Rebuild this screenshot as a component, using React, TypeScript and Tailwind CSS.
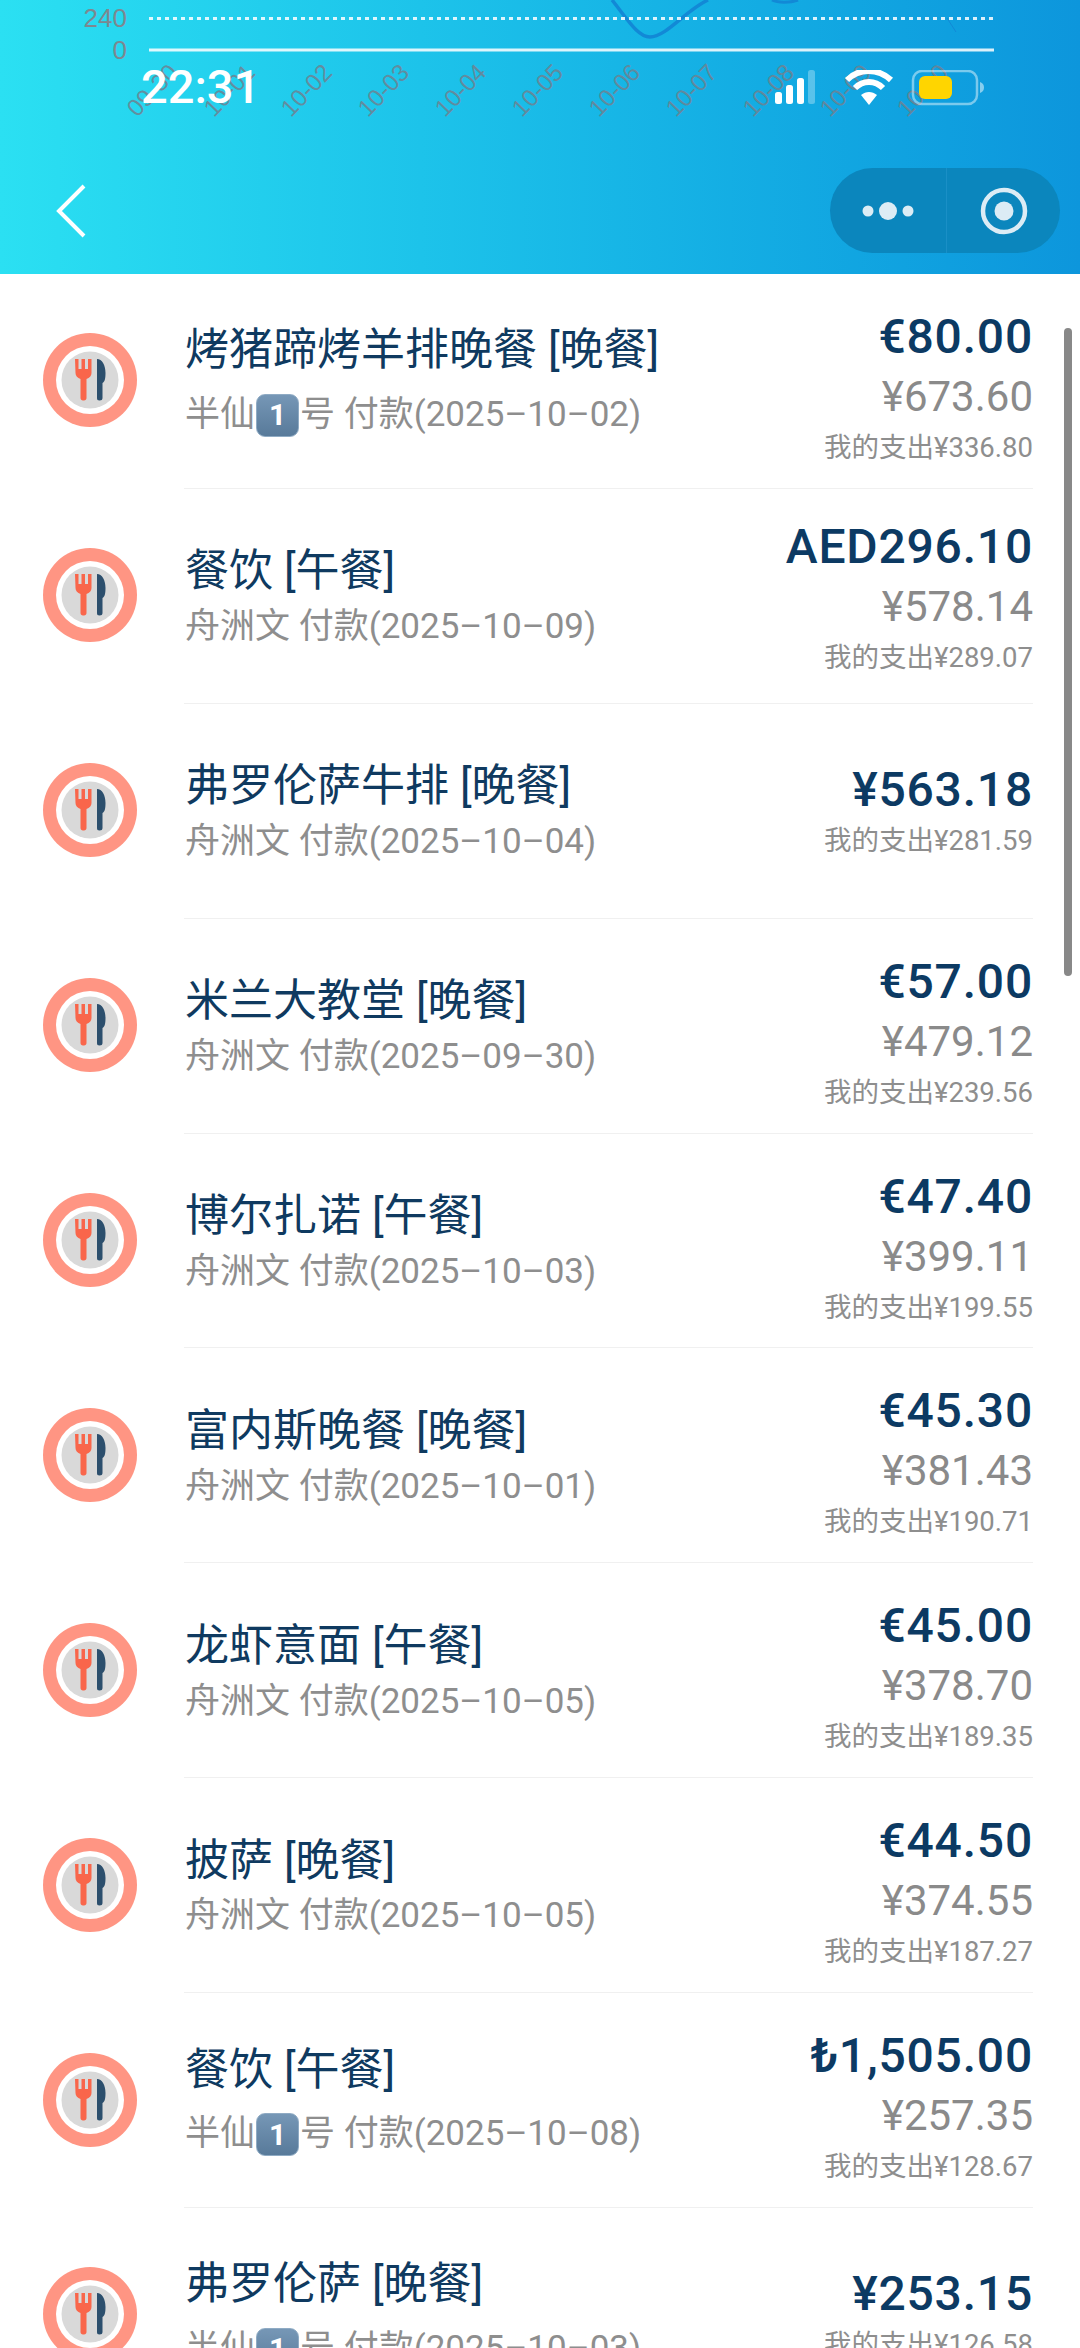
const FONT = "font-['Roboto','Noto_Sans_CJK_SC',sans-serif]";

type Expense = {
  title: string;
  payer: string;
  date: string;
  amount: string;
  converted?: string;
  mine: string;
  rightPad: string;
};

const EXPENSES: Expense[] = [
  { title: "烤猪蹄烤羊排晚餐 [晚餐]", payer: "半仙1号", date: "2025–10–02", amount: "€80.00", converted: "¥673.60", mine: "¥336.80", rightPad: "pt-[33px]" },
  { title: "餐饮 [午餐]", payer: "舟洲文", date: "2025–10–09", amount: "AED296.10", converted: "¥578.14", mine: "¥289.07", rightPad: "pt-[28px]" },
  { title: "弗罗伦萨牛排 [晚餐]", payer: "舟洲文", date: "2025–10–04", amount: "¥563.18", mine: "¥281.59", rightPad: "pt-[56px]" },
  { title: "米兰大教堂 [晚餐]", payer: "舟洲文", date: "2025–09–30", amount: "€57.00", converted: "¥479.12", mine: "¥239.56", rightPad: "pt-[33px]" },
  { title: "博尔扎诺 [午餐]", payer: "舟洲文", date: "2025–10–03", amount: "€47.40", converted: "¥399.11", mine: "¥199.55", rightPad: "pt-[33px]" },
  { title: "富内斯晚餐 [晚餐]", payer: "舟洲文", date: "2025–10–01", amount: "€45.30", converted: "¥381.43", mine: "¥190.71", rightPad: "pt-[33px]" },
  { title: "龙虾意面 [午餐]", payer: "舟洲文", date: "2025–10–05", amount: "€45.00", converted: "¥378.70", mine: "¥189.35", rightPad: "pt-[33px]" },
  { title: "披萨 [晚餐]", payer: "舟洲文", date: "2025–10–05", amount: "€44.50", converted: "¥374.55", mine: "¥187.27", rightPad: "pt-[33px]" },
  { title: "餐饮 [午餐]", payer: "半仙1号", date: "2025–10–08", amount: "₺1,505.00", converted: "¥257.35", mine: "¥128.67", rightPad: "pt-[33px]" },
  { title: "弗罗伦萨 [晚餐]", payer: "半仙1号", date: "2025–10–03", amount: "¥253.15", mine: "¥126.58", rightPad: "pt-[56px]" },
];

const CHART_DATES = ["09-30", "10-01", "10-02", "10-03", "10-04", "10-05", "10-06", "10-07", "10-08", "10-09", "10-10"];

// chart that has scrolled up behind the status bar
const ChartPeek = () => (
  <svg className="absolute left-0 top-0" width="1080" height="130" viewBox="0 0 1080 130" aria-hidden>
    <path d="M612 0C628 20 638 37 650 37C666 37 686 10 708 0" fill="none" stroke="#1289d6" strokeWidth="3.500" />
    <path d="M772 0C778 3 790 3 798 0" fill="none" stroke="#1289d6" strokeWidth="3" />
    <path d="M947 18L956 32" fill="none" stroke="#1289d6" strokeWidth="1" />
    <line x1="149" y1="18.5" x2="994" y2="18.5" stroke="#ffffff" strokeOpacity="0.85" strokeWidth="3" strokeDasharray="4 4" />
    <line x1="149" y1="50" x2="994" y2="50" stroke="#ffffff" strokeOpacity="0.85" strokeWidth="3" />
    <text x="127" y="27" textAnchor="end" fontFamily="Liberation Sans" fontSize="26" fill="#7d8890">240</text>
    <text x="127" y="59" textAnchor="end" fontFamily="Liberation Sans" fontSize="26" fill="#7d8890">0</text>
    {CHART_DATES.map((label, i) => (
      <text
        key={label}
        x={0}
        y={0}
        transform={`translate(${137 + i * 77} 118) rotate(-46)`}
        fontFamily="Liberation Sans"
        fontSize="24"
        fill="#6f8291"
        fillOpacity="0.85"
      >
        {label}
      </text>
    ))}
  </svg>
);

const StatusIcons = () => (
  <svg width="212" height="36" viewBox="0 0 212 36" aria-hidden>
    <rect x="0" y="22" width="7" height="12" rx="2.5" fill="#fff" />
    <rect x="11" y="15" width="7" height="19" rx="2.5" fill="#fff" />
    <rect x="22" y="8" width="7" height="26" rx="2.5" fill="#fff" />
    <rect x="33" y="0" width="7" height="34" rx="2.5" fill="#fff" fillOpacity="0.3" />
    <path d="M72 10C84 -2 103 -2 116 10" fill="none" stroke="#fff" strokeWidth="6" />
    <path d="M80 18C88 10 100 10 108 18" fill="none" stroke="#fff" strokeWidth="6" />
    <path d="M86 25C91 21 97 21 102 25L94 35Z" fill="#fff" />
    <rect x="138" y="1" width="64" height="33" rx="9" fill="none" stroke="#fff" strokeOpacity="0.45" strokeWidth="2.5" />
    <rect x="144" y="6" width="33" height="23" rx="6" fill="#ffd500" />
    <path d="M205 12C208 13 209 15 209 17.500C209 20 208 22 205 23Z" fill="#fff" fillOpacity="0.5" />
  </svg>
);

const MealIcon = () => (
  <svg className="-mt-[2px] shrink-0" width="94" height="94" viewBox="0 0 94 94" aria-hidden>
    <circle cx="47" cy="47" r="47" fill="#ff9583" />
    <circle cx="47" cy="47" r="34" fill="#ffffff" />
    <circle cx="47" cy="47" r="28.500" fill="#d9d9d9" />
    <path
      d="M32 26h3.500v10h3v-10h3.500v10h3v-10h3.500v14c0 3-2 5-5 6v19c0 1.500-1 2.500-2.500 2.500h-1c-1.500 0-2.500-1-2.500-2.500v-19c-3-1-5-3-5-6z"
      fill="#f9664b"
    />
    <path d="M54 26c5 0 8.500 6 8.500 14c0 6-1 9-3 10v15c0 1.700-1 2.500-3 2.500s-2.500-.800-2.500-2.500z" fill="#2c4f6d" />
  </svg>
);

// the keycap emoji in the payer name
const KeycapOne = () => (
  <span className="mx-[1px] inline-flex h-[43px] w-[43px] items-center justify-center rounded-[9px] border border-[#8fabc4] bg-gradient-to-b from-[#7697b6] to-[#587a9a] align-middle text-[30px] font-bold leading-none text-white">
    1
  </span>
);

const Payer = ({ name }: { name: string }) => {
  const parts = name.split("1");
  if (parts.length < 2) return <>{name}</>;
  return (
    <>
      {parts[0]}
      <KeycapOne />
      {parts[1]}
    </>
  );
};

const ExpenseRow = ({ item }: { item: Expense }) => {
  const hasKeycap = item.payer.includes("1");
  return (
    <div className="flex h-[214.9px] shrink-0 pl-[43px] pr-[47px]">
      <div className="flex w-[142px] shrink-0 items-center">
        <MealIcon />
      </div>
      <div className="-ml-px flex min-w-0 flex-1 justify-between border-b border-[#f0f0f0] pl-px">
        <div className="flex flex-col justify-center pt-[2px]">
          <p className="text-[44px] leading-[50px] text-[#0f3a60]">{item.title}</p>
          <p
            className={
              hasKeycap
                ? "mt-[17px] flex h-[46px] items-center whitespace-pre text-[35px] text-[#8e8e8e]"
                : "mt-[11px] flex h-[40px] items-center whitespace-pre text-[35px] text-[#8e8e8e]"
            }
          >
            <Payer name={item.payer} /> 付款({item.date})
          </p>
        </div>
        <div className={`flex flex-col items-end ${item.rightPad}`}>
          <p className="text-[48px] font-medium leading-[60px] tracking-[0.8px] text-[#0c3a63]">{item.amount}</p>
          {item.converted && <p className="text-[42px] leading-[60px] text-[#8a8a8a]">{item.converted}</p>}
          <p className="text-[27.5px] leading-[42px] text-[#8e8e8e]">我的支出{item.mine}</p>
        </div>
      </div>
    </div>
  );
};

export default function App() {
  return (
    <div className={`relative flex h-[2348px] w-[1080px] flex-col overflow-hidden bg-white ${FONT}`}>
      <header className="relative h-[274px] shrink-0 bg-gradient-to-r from-[#2be0f2] to-[#0d96dc]">
        <ChartPeek />
        <div className="relative flex items-start justify-between pl-[141px] pr-[93px] pt-[60px]">
          <span className="text-[47px] font-medium leading-[54px] text-white">22:31</span>
          <div className="pt-[10px]">
            <StatusIcons />
          </div>
        </div>
        <div className="relative mt-[54px] flex items-center justify-between pl-[56px] pr-[20px]">
          <svg width="32" height="54" viewBox="0 0 32 54" fill="none" aria-label="返回">
            <path d="M28 2L3 27L28 52" stroke="#fff" strokeWidth="4" />
          </svg>
          <div className="flex h-[85px] w-[230px] items-center rounded-[43px] bg-[#0b86bd]">
            <div className="flex h-full w-[117px] items-center justify-center border-r border-[#1a8fc6]">
              <svg width="52" height="20" viewBox="0 0 52 20" aria-hidden>
                <circle cx="6" cy="10" r="5.500" fill="#dcecf5" />
                <circle cx="26" cy="10" r="9" fill="#dcecf5" />
                <circle cx="46" cy="10" r="5.500" fill="#dcecf5" />
              </svg>
            </div>
            <div className="flex flex-1 items-center justify-center">
              <svg width="48" height="48" viewBox="0 0 48 48" aria-hidden>
                <circle cx="24" cy="24" r="21" fill="none" stroke="#dcecf5" strokeWidth="4.500" />
                <circle cx="24" cy="24" r="9.500" fill="#dcecf5" />
              </svg>
            </div>
          </div>
        </div>
      </header>
      <main className="flex flex-col">
        {EXPENSES.map((item) => (
          <ExpenseRow key={`${item.title}-${item.date}`} item={item} />
        ))}
      </main>
      {/* scrollbar overlay */}
      <div className="absolute right-[8px] top-[328px] h-[648px] w-[8px] rounded-[4px] bg-[#888888]" />
    </div>
  );
}
